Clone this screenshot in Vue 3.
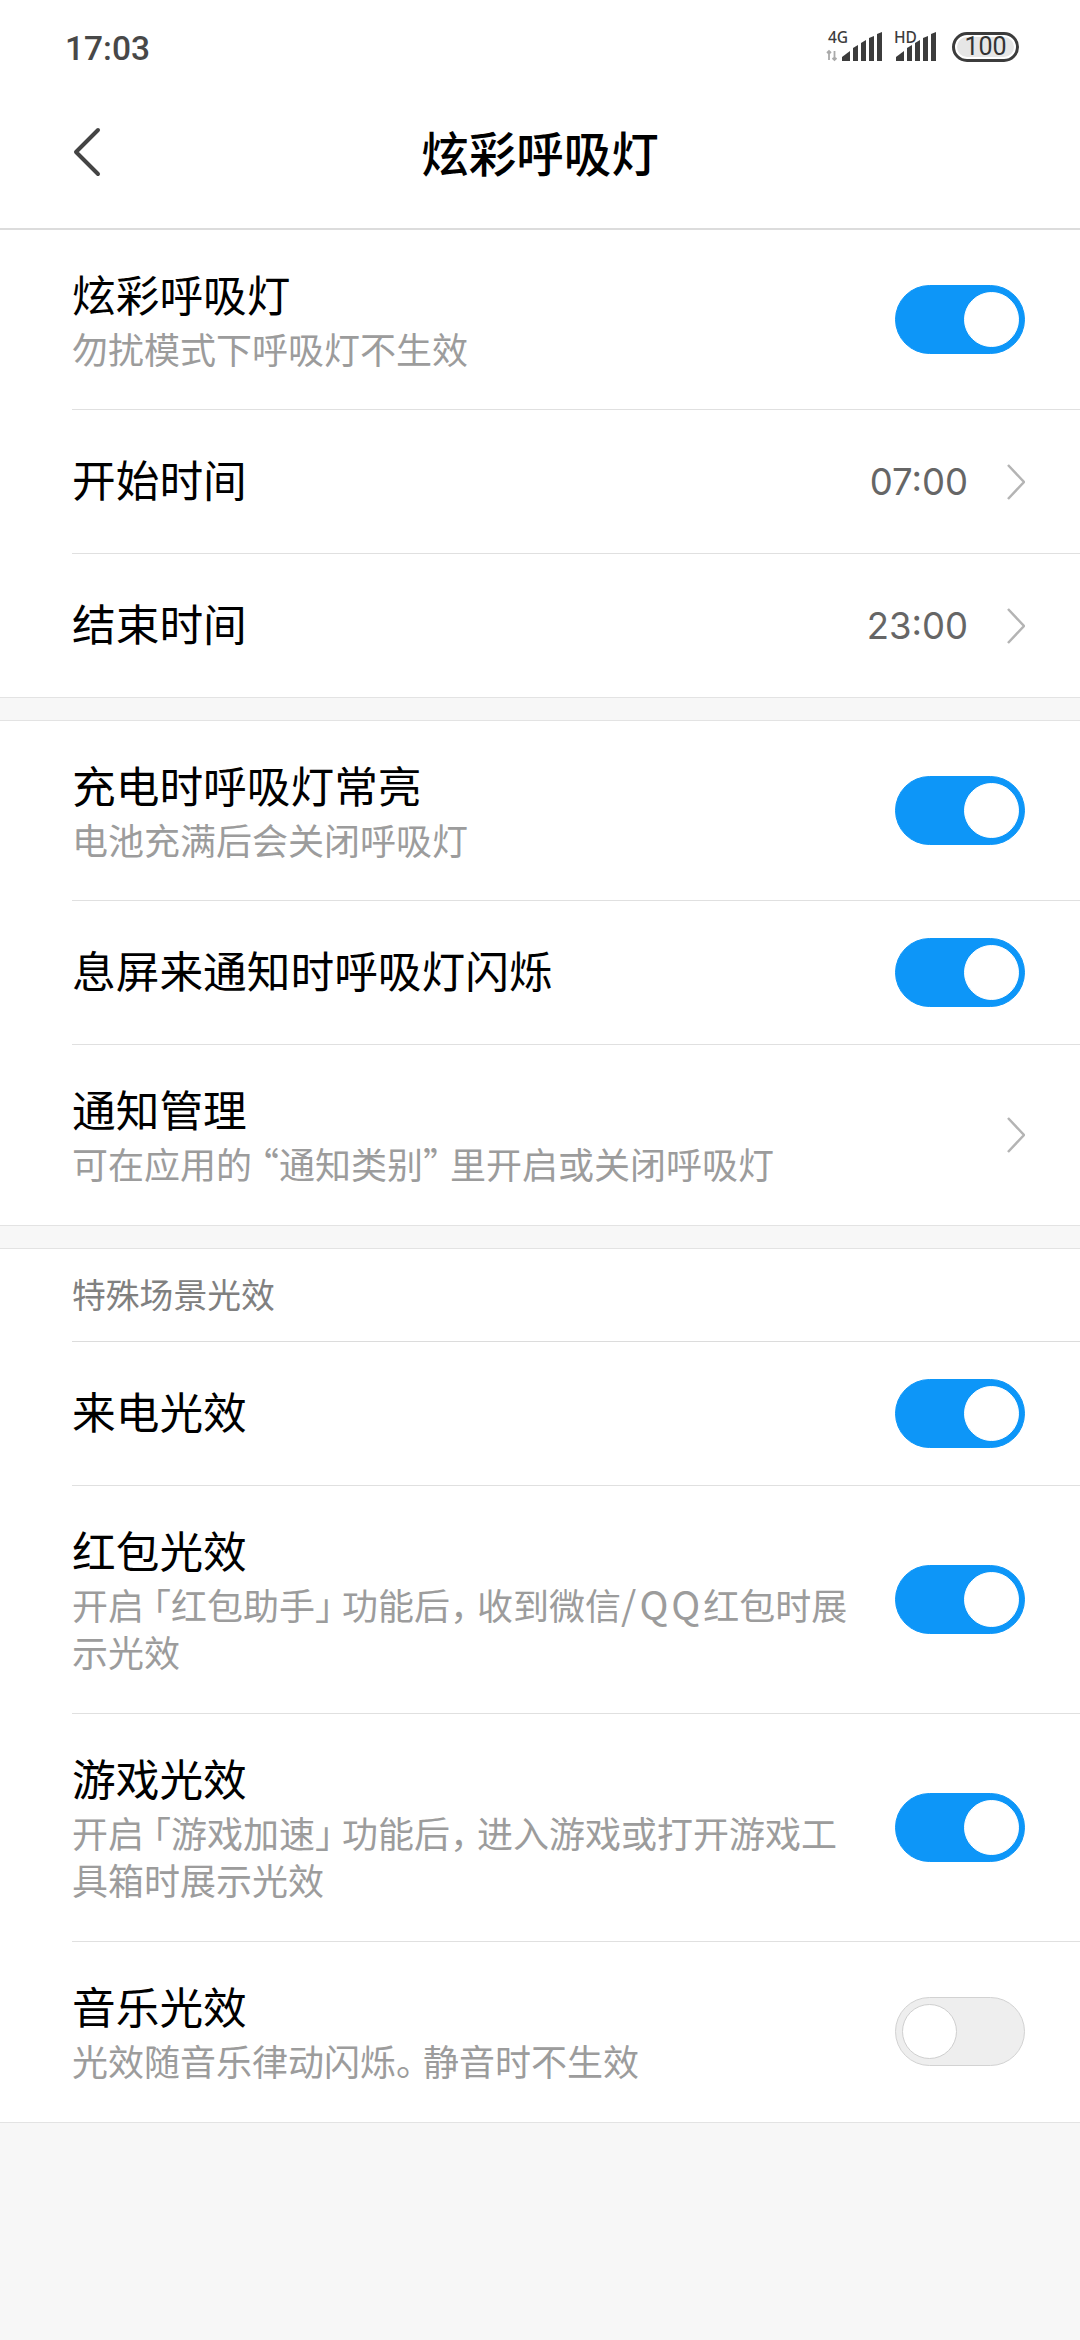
<template>
  <div class="page">
    <header class="top">
      <div class="status">
        <span class="clock">17:03</span>
        <div class="status-icons">
          <svg class="sig-a" width="56" height="38" viewBox="0 -4 56 38">
            <text x="2" y="14" class="sig-label">4G</text>
            <path d="M3 22v9M1 24l2-2 2 2M8.500 31v-9M6.500 29l2 2 2-2" fill="none" stroke="#aaa" stroke-width="1.800" />
            <path v-for="b in bars" :key="b" :d="b" transform="translate(16 3)" fill="#3c3c3c" />
          </svg>
          <svg class="sig-b" width="42" height="38" viewBox="0 -4 42 38">
            <text x="0" y="14" class="sig-label">HD</text>
            <path v-for="b in bars" :key="b" :d="b" transform="translate(2 3)" fill="#3c3c3c" />
          </svg>
          <div class="battery"><span>100</span></div>
        </div>
      </div>
      <div class="nav">
        <svg class="back" width="30" height="50" viewBox="0 0 30 50">
          <path d="M26 3 4 25l22 22" fill="none" stroke="#444" stroke-width="4" stroke-linecap="round" stroke-linejoin="round" />
        </svg>
        <h1 class="nav-title">炫彩呼吸灯</h1>
      </div>
    </header>

    <section v-for="(group, i) in groups" :key="i" class="group">
      <div v-if="group.heading" class="heading"><span>{{ group.heading }}</span></div>
      <div v-for="row in group.rows" :key="row.title" class="row">
        <div class="row-inner" :class="{ single: !row.sub, tall: row.tall }">
          <div class="text">
            <div class="title">{{ row.title }}</div>
            <div v-if="row.sub" class="sub"><span v-for="(p, j) in parts(row.sub)" :key="j" :class="p.cls">{{ p.text }}</span></div>
          </div>
          <span v-if="row.value" class="value">{{ row.value }}</span>
          <svg v-if="row.arrow" class="chev" width="20" height="38" viewBox="0 0 20 38">
            <path d="M3 2l16 17L3 36" fill="none" stroke="#b4b4b4" stroke-width="2.500" />
          </svg>
          <div v-if="row.on !== undefined" class="switch" :class="{ on: row.on }"><i class="knob"></i></div>
        </div>
      </div>
    </section>
  </div>
</template>

<script setup>
  const bars = [
    'M0 29v-4l8-6v10z',
    'M11 29V16l5-3v16z',
    'M19 29V11l5-3v21z',
    'M27 29V6l5-2v25z',
    'M35 29V2l5-2v29z',
  ];

  const groups = [
    {
      rows: [
        { title: '炫彩呼吸灯', sub: '勿扰模式下呼吸灯不生效', on: true },
        { title: '开始时间', value: '07:00', arrow: true },
        { title: '结束时间', value: '23:00', arrow: true },
      ],
    },
    {
      rows: [
        { title: '充电时呼吸灯常亮', sub: '电池充满后会关闭呼吸灯', on: true },
        { title: '息屏来通知时呼吸灯闪烁', on: true },
        { title: '通知管理', sub: '可在应用的“通知类别”里开启或关闭呼吸灯', arrow: true },
      ],
    },
    {
      heading: '特殊场景光效',
      rows: [
        { title: '来电光效', on: true },
        { title: '红包光效', sub: '开启「红包助手」功能后，收到微信/QQ红包时展示光效', on: true, tall: true },
        { title: '游戏光效', sub: '开启「游戏加速」功能后，进入游戏或打开游戏工具箱时展示光效', on: true, tall: true },
        { title: '音乐光效', sub: '光效随音乐律动闪烁。静音时不生效', on: false },
      ],
    },
  ];

  // punctuation sits tighter than the font's full-width boxes
  function parts(str) {
    return str
      .split(/([「“」”，。]|\/QQ)/)
      .filter(Boolean)
      .map((text) => {
        let cls = '';
        if ('「“'.includes(text)) cls = 'open';
        else if ('」”，。'.includes(text)) cls = 'close';
        else if (text === '/QQ') cls = 'latin';
        return { text, cls };
      });
  }
</script>

<style>
  html,
  body {
    margin: 0;
    background: #f7f7f7;
  }
</style>

<style scoped>
  .page {
    width: 1080px;
    min-height: 2340px;
    background: #f7f7f7;
    font-family: 'Noto Sans CJK SC', 'Noto Sans', sans-serif;
    color: #000;
  }
  .top {
    background: #fff;
    border-bottom: 2px solid #dcdcdc;
  }
  .status {
    height: 76px;
    padding: 0 61px 0 65px;
    display: flex;
    align-items: center;
    justify-content: space-between;
    box-sizing: border-box;
  }
  .clock {
    font-family: Roboto, sans-serif;
    font-size: 33.5px;
    font-weight: 500;
    color: #484848;
    margin-top: 20px;
  }
  .status-icons {
    display: flex;
    align-items: center;
    margin-top: 12px;
  }
  .sig-b {
    margin-left: 12px;
  }
  .sig-label {
    font-family: 'Noto Sans', sans-serif;
    font-size: 15.500px;
    font-weight: 500;
    fill: #3c3c3c;
  }
  .battery {
    margin-left: 16px;
    margin-top: 5px;
    width: 67px;
    height: 30px;
    box-sizing: border-box;
    border: 3px solid #3c3c3c;
    border-radius: 15px;
    display: flex;
    align-items: center;
    justify-content: center;
    background: linear-gradient(#e6e6e6, #e6e6e6) padding-box;
    box-shadow: inset 0 0 0 2px #fff;
    font-family: Roboto, sans-serif;
    font-size: 25px;
    color: #333;
  }
  .nav {
    height: 152px;
    position: relative;
    display: flex;
    align-items: center;
    justify-content: center;
  }
  .back {
    position: absolute;
    left: 72px;
    top: 51px;
  }
  .nav-title {
    margin: 0;
    font-size: 47.500px;
    font-weight: 500;
    line-height: 60px;
  }
  .group {
    background: #fff;
    border-top: 1px solid #e3e3e3;
    border-bottom: 1px solid #e3e3e3;
    margin-bottom: 22px;
  }
  .top + .group {
    border-top: 0;
  }
  .heading {
    margin-left: 72px;
    height: 93px;
    box-sizing: border-box;
    padding-bottom: 4px;
    display: flex;
    align-items: center;
    font-size: 33.8px;
    color: #808080;
    border-bottom: 1px solid #dcdcdc;
  }
  .row {
    padding-left: 72px;
  }
  .row-inner {
    display: flex;
    align-items: center;
    padding: 37px 55px 37px 0;
    border-bottom: 1px solid #e0e0e0;
  }
  .row:last-child .row-inner {
    border-bottom: 0;
  }
  .row:last-child .row-inner:not(.single),
  .row-inner.tall {
    padding-bottom: 38px;
  }
  .row-inner.single {
    min-height: 69px;
  }
  .text {
    flex: 1;
    min-width: 0;
    padding-right: 35px;
  }
  .title {
    font-size: 43.7px;
    line-height: 53px;
  }
  .single .title {
    margin-top: -6px;
  }
  .sub {
    margin-top: 5px;
    font-size: 36px;
    line-height: 47px;
    color: #9c9c9c;
  }
  .open {
    margin-left: -9px;
  }
  .close {
    margin-right: -9px;
  }
  .latin {
    font-size: 39px;
    line-height: 0;
    letter-spacing: 3px;
  }
  .value {
    font-family: Inter, sans-serif;
    font-size: 36.500px;
    color: #666;
    margin-right: 37px;
  }
  .chev {
    flex: none;
  }
  .switch {
    flex: none;
    position: relative;
    width: 130px;
    height: 69px;
    box-sizing: border-box;
    border-radius: 35px;
    background: #eee;
    border: 1px solid #d2d2d2;
  }
  .switch.on {
    background: #0d96f8;
    border-color: #0d96f8;
  }
  .knob {
    position: absolute;
    top: 6px;
    left: 6px;
    width: 55px;
    height: 55px;
    box-sizing: border-box;
    border-radius: 50%;
    background: #fff;
    border: 1px solid #cfcfcf;
  }
  .on .knob {
    left: auto;
    right: 5px;
    border-color: #fff;
  }
</style>
